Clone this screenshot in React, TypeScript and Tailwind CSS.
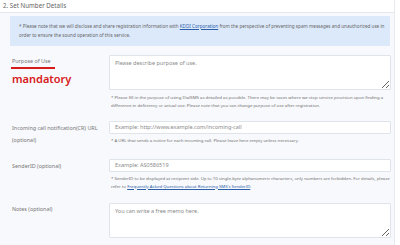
import React from 'react';

const font = { fontFamily: '"Noto Sans", "Open Sans", sans-serif' };

const Help: React.FC<{ children: React.ReactNode; className?: string }> = ({ children, className = '' }) => (
  <p className={`text-[4.3px] leading-[8px] text-[#6f6f6f] pl-[2px] ${className}`}>{children}</p>
);

const fieldCls =
  'block w-[282px] bg-white border border-[#dfe3ea] rounded-[1px] px-[5px] text-[5.5px] text-[#333] placeholder:text-[#8a8a8a] outline-none';

const App: React.FC = () => {
  return (
    <div className="w-[400px] h-[245px] bg-white flex overflow-hidden" style={font}>
      <div className="w-[395px] border-r border-[#e6e9ef] flex flex-col">
        {/* Title */}
        <div className="h-[13px] bg-white border-b border-[#e3e6eb] pl-[3px] text-[6.2px] leading-[12px] text-[#666]">
          2. Set Number Details
        </div>

        <div className="flex-1 bg-[#f8f9fc] pl-[10px] pr-[4px] pt-[3px]">
          {/* Notice */}
          <div className="bg-[#dce9fb] pl-[9px] pr-[3px] pt-[5.5px] pb-[6.5px] text-[4.62px] leading-[9px] text-[#666]">
            <p>
              * Please note that we will disclose and share registration information with{' '}
              <span className="text-[#2b5ea8] underline">KDDI Corporation</span> from the perspective of preventing spam messages and unauthorized use in order to ensure the sound operation of this service.
            </p>
          </div>

          {/* Purpose of Use */}
          <div className="grid grid-cols-[99px_1fr] mt-[9px]">
            <div className="pl-[2px] pt-[1.5px]">
              <div className="text-[5.4px] leading-[9px] text-[#777]">Purpose of Use</div>
              <div className="-ml-[1px] w-[44px] h-[1.5px] bg-[#d71a1a] mt-[1.5px]" />
              <div className="text-[11px] leading-[14px] font-semibold text-[#d71a1a] mt-[3px]">mandatory</div>
            </div>
            <div>
              <textarea
                placeholder="Please describe purpose of use."
                className={`${fieldCls} h-[35px] py-[3px] leading-[8px] resize-y`}
              />
              <Help className="mt-[2.5px]">
                * Please fill in the purpose of using DialSMS as detailed as possible. There may be cases where we stop service provision upon finding a difference in deficiency or actual use. Please note that you can change purpose of use after registration.
              </Help>
            </div>
          </div>

          {/* Incoming call URL */}
          <div className="grid grid-cols-[99px_1fr] mt-[12px]">
            <div className="pl-[2px] pt-[1px] text-[5.4px] leading-[12px] text-[#777]">
              <div>Incoming call notification(CR) URL</div>
              <div>(optional)</div>
            </div>
            <div>
              <input placeholder="Example: http://www.example.com/incoming-call" className={`${fieldCls} h-[13px]`} />
              <Help className="mt-[2px]">* A URL that sends a notice for each incoming call. Please leave here empty unless necessary.</Help>
            </div>
          </div>

          {/* SenderID */}
          <div className="grid grid-cols-[99px_1fr] mt-[13px]">
            <div className="pl-[2px] pt-[1px] text-[5.4px] leading-[12px] text-[#777]">SenderID (optional)</div>
            <div>
              <input placeholder="Example: AS0586519" className={`${fieldCls} h-[13px]`} />
              <Help className="mt-[2px]">
                * SenderID to be displayed at recipient side. Up to 10 single-byte alphanumeric characters, only numbers are forbidden. For details, please refer to{' '}
                <span className="text-[#2b5ea8] underline">Frequently Asked Questions about Returning SMS's SenderID</span>.
              </Help>
            </div>
          </div>

          {/* Notes */}
          <div className="grid grid-cols-[99px_1fr] mt-[13px]">
            <div className="pl-[2px] pt-[1.5px] text-[5.4px] leading-[10px] text-[#777]">Notes (optional)</div>
            <div>
              <textarea
                placeholder="You can write a free memo here."
                className={`${fieldCls} h-[35px] py-[3px] leading-[8px] resize-y`}
              />
            </div>
          </div>
        </div>
      </div>
    </div>
  );
};

export default App;
